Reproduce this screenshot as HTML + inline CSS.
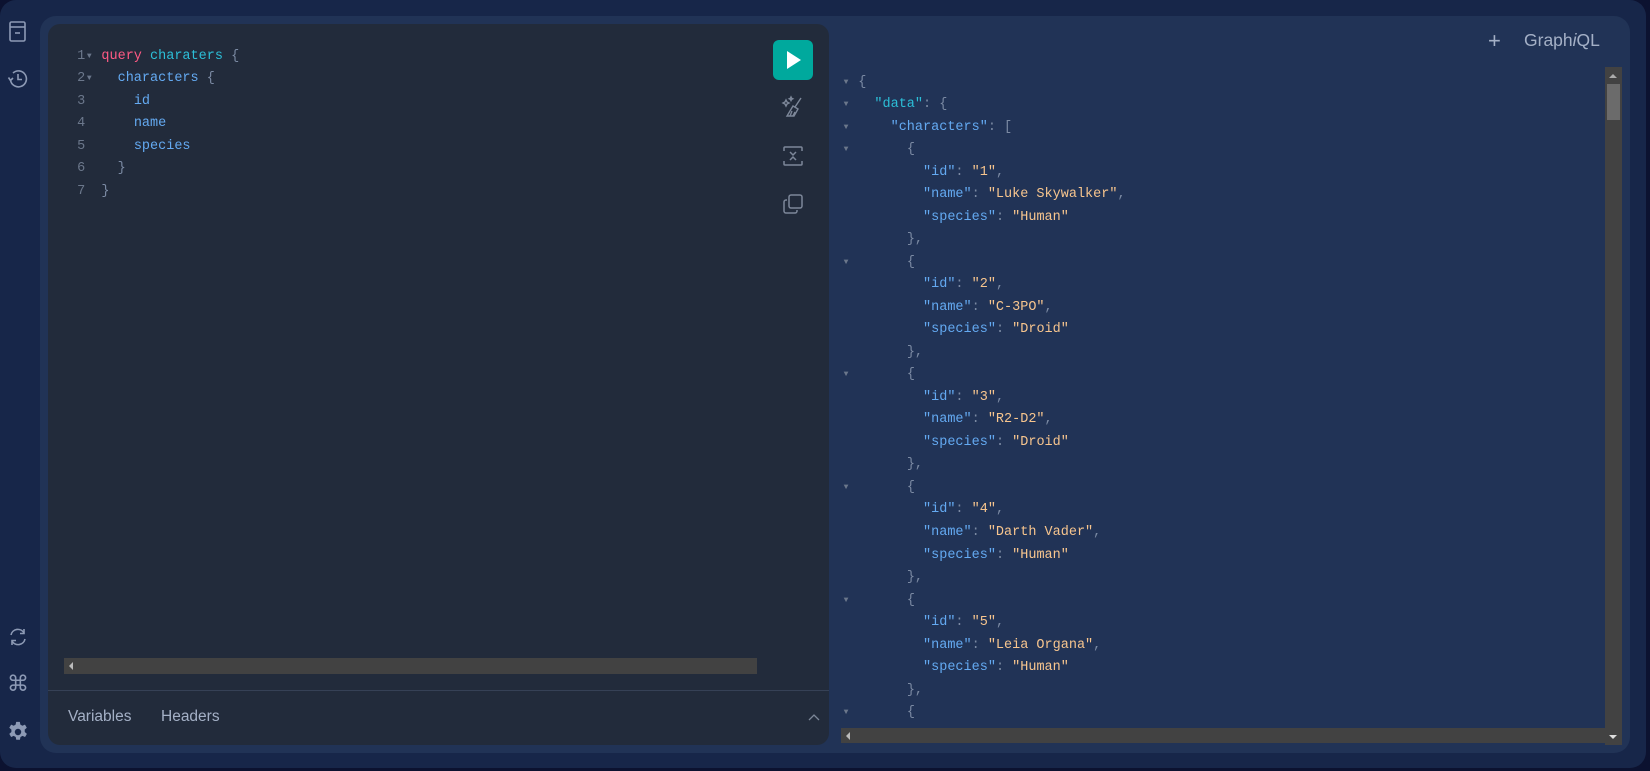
<!DOCTYPE html>
<html><head><meta charset="utf-8"><style>
*{margin:0;padding:0;box-sizing:border-box}
html,body{width:1650px;height:771px;overflow:hidden;background:#0c1230}
.outer{position:absolute;left:0;top:0;width:1646px;height:768px;background:#172649;border-radius:16px}
.panel{position:absolute;left:40px;top:16px;width:1590px;height:737px;background:#213356;border-radius:16px}
.editor{position:absolute;left:48px;top:24px;width:781px;height:721px;background:#222b3b;border-radius:12px}
pre{font-family:"Liberation Mono",monospace;font-size:13.5px;line-height:22.55px;position:absolute;margin:0}
.p{color:#7b8aa3}.k{color:#ff5a85}.c{color:#2cbfd8}.f{color:#64aaf2}.s{color:#f7c58e}.ln{color:#6b778b}
.tri{color:#6b778b;font-size:8px;display:inline-block;width:8.1px;text-align:center;vertical-align:top}
.run{position:absolute;left:773px;top:40px;width:40px;height:40px;background:#00a99d;border-radius:6px}
.ico{position:absolute}
.sb{position:absolute;background:#424242}
</style></head><body>
<div class="outer"></div>
<div class="panel"></div>
<div class="editor"></div>

<svg class="ico" style="left:7px;top:20px" width="22" height="24" viewBox="0 0 22 24" fill="none" stroke="#8d9ab5" stroke-width="1.6"><rect x="3" y="2" width="15" height="19" rx="1.5"/><line x1="3" y1="7" x2="18" y2="7"/><line x1="8" y1="13" x2="13" y2="13"/></svg>
<svg class="ico" style="left:7px;top:68px" width="22" height="22" viewBox="0 0 22 22" fill="none" stroke="#8d9ab5" stroke-width="1.6"><path d="M3.5 12 A8 8 0 1 0 6 5"/><path d="M1.5 9.5 L3.5 12.5 L6 10"/><path d="M11 6 V11.5 H15"/></svg>
<svg class="ico" style="left:7px;top:626px" width="22" height="22" viewBox="0 0 22 22" fill="none" stroke="#8d9ab5" stroke-width="1.6"><path d="M4 9 A7 7 0 0 1 17 7"/><path d="M17 3 V7.5 H13"/><path d="M18 13 A7 7 0 0 1 5 15"/><path d="M5 19 V14.5 H9"/></svg>
<div class="ico" style="left:7px;top:672px;color:#8d9ab5;font-size:22px;font-family:'DejaVu Sans',sans-serif">⌘</div>
<svg class="ico" style="left:7px;top:721px" width="22" height="22" viewBox="0 0 24 24" fill="#8d9ab5"><path d="M10 1h4l.6 3 2.2 1.2 2.8-1.2 2 3.4-2.3 2 .1 2.6 2.3 2-2 3.4-2.8-1.2-2.2 1.2-.6 3h-4l-.6-3-2.2-1.2-2.8 1.2-2-3.4 2.3-2v-2.6l-2.3-2 2-3.4 2.8 1.2L9.4 4z"/><circle cx="12" cy="12" r="3.5" fill="#172649"/></svg>

<pre style="left:69px;top:45.5px"><span class="ln"> 1</span><span class="tri">▼</span> <span class="k">query</span> <span class="c">charaters</span> <span class="p">{</span>
<span class="ln"> 2</span><span class="tri">▼</span>   <span class="f">characters</span> <span class="p">{</span>
<span class="ln"> 3</span>      <span class="f">id</span>
<span class="ln"> 4</span>      <span class="f">name</span>
<span class="ln"> 5</span>      <span class="f">species</span>
<span class="ln"> 6</span>    <span class="p">}</span>
<span class="ln"> 7</span>  <span class="p">}</span></pre>

<div class="run"><svg width="40" height="40" viewBox="0 0 40 40"><path d="M14 11 L28 20 L14 29 Z" fill="#fff"/></svg></div>
<svg class="ico" style="left:781px;top:95px" width="24" height="24" viewBox="0 0 24 24" fill="none" stroke="#7d8799" stroke-width="1.4"><path d="M20 3 L14 12"/><path d="M12 11 L17 14 L13 21 L6 21 Z"/><path d="M9 21 L11 16 M12 21 L14 17"/><path d="M5 5 l1 2 2 1-2 1-1 2-1-2-2-1 2-1z"/><path d="M10 2 l.6 1.2 1.2.6-1.2.6-.6 1.2-.6-1.2-1.2-.6 1.2-.6z"/></svg>
<svg class="ico" style="left:781px;top:144px" width="24" height="24" viewBox="0 0 24 24" fill="none" stroke="#7d8799" stroke-width="1.5"><path d="M3 7 V4 a1 1 0 0 1 1-1 H20 a1 1 0 0 1 1 1 V7"/><path d="M3 17 V20 a1 1 0 0 0 1 1 H20 a1 1 0 0 0 1-1 V17"/><path d="M9 8 L12 11 L15 8"/><path d="M9 16 L12 13 L15 16"/></svg>
<svg class="ico" style="left:781px;top:192px" width="24" height="24" viewBox="0 0 24 24" fill="none" stroke="#7d8799" stroke-width="1.5"><rect x="8" y="3" width="13" height="13" rx="2"/><path d="M6 8 H5 a2 2 0 0 0-2 2 V19 a2 2 0 0 0 2 2 H14 a2 2 0 0 0 2-2 V18"/></svg>

<div class="sb" style="left:64px;top:658px;width:693px;height:16px"><span style="position:absolute;left:5px;top:4px;width:0;height:0;border-top:4px solid transparent;border-bottom:4px solid transparent;border-right:4px solid #bbb"></span></div>
<div style="position:absolute;left:48px;top:690px;width:781px;height:1px;background:#364156"></div>
<div style="position:absolute;left:68px;top:708px;font:15.5px 'Liberation Sans',sans-serif;color:#a4b0c6">Variables</div>
<div style="position:absolute;left:161px;top:708px;font:15.5px 'Liberation Sans',sans-serif;color:#a4b0c6">Headers</div>
<svg class="ico" style="left:807px;top:712px" width="14" height="10" viewBox="0 0 14 10" fill="none" stroke="#7d8799" stroke-width="1.3"><path d="M2 8 L7 3 L12 8"/></svg>

<div style="position:absolute;left:1488px;top:28px;font:22px 'Liberation Sans',sans-serif;color:#a4b0c6">+</div>
<div style="position:absolute;left:1524px;top:30px;font:17.5px 'Liberation Sans',sans-serif;color:#a4b0c6">Graph<i>i</i>QL</div>

<pre style="left:842px;top:71.7px;line-height:22.52px"><span class="tri">▼</span> <span class="p">{</span>
<span class="tri">▼</span>   <span class="c">"data"</span><span class="p">: {</span>
<span class="tri">▼</span>     <span class="f">"characters"</span><span class="p">: [</span>
<span class="tri">▼</span>       <span class="p">{</span>
          <span class="f">"id"</span><span class="p">: </span><span class="s">"1"</span><span class="p">,</span>
          <span class="f">"name"</span><span class="p">: </span><span class="s">"Luke Skywalker"</span><span class="p">,</span>
          <span class="f">"species"</span><span class="p">: </span><span class="s">"Human"</span>
        <span class="p">},</span>
<span class="tri">▼</span>       <span class="p">{</span>
          <span class="f">"id"</span><span class="p">: </span><span class="s">"2"</span><span class="p">,</span>
          <span class="f">"name"</span><span class="p">: </span><span class="s">"C-3PO"</span><span class="p">,</span>
          <span class="f">"species"</span><span class="p">: </span><span class="s">"Droid"</span>
        <span class="p">},</span>
<span class="tri">▼</span>       <span class="p">{</span>
          <span class="f">"id"</span><span class="p">: </span><span class="s">"3"</span><span class="p">,</span>
          <span class="f">"name"</span><span class="p">: </span><span class="s">"R2-D2"</span><span class="p">,</span>
          <span class="f">"species"</span><span class="p">: </span><span class="s">"Droid"</span>
        <span class="p">},</span>
<span class="tri">▼</span>       <span class="p">{</span>
          <span class="f">"id"</span><span class="p">: </span><span class="s">"4"</span><span class="p">,</span>
          <span class="f">"name"</span><span class="p">: </span><span class="s">"Darth Vader"</span><span class="p">,</span>
          <span class="f">"species"</span><span class="p">: </span><span class="s">"Human"</span>
        <span class="p">},</span>
<span class="tri">▼</span>       <span class="p">{</span>
          <span class="f">"id"</span><span class="p">: </span><span class="s">"5"</span><span class="p">,</span>
          <span class="f">"name"</span><span class="p">: </span><span class="s">"Leia Organa"</span><span class="p">,</span>
          <span class="f">"species"</span><span class="p">: </span><span class="s">"Human"</span>
        <span class="p">},</span>
<span class="tri">▼</span>       <span class="p">{</span></pre>

<div style="position:absolute;left:841px;top:726px;width:780px;height:20px;background:#213356"></div>
<div class="sb" style="left:1605px;top:67px;width:17px;height:678px"></div>
<div style="position:absolute;left:1607px;top:84px;width:13px;height:36px;background:#6b6b6b"></div>
<span style="position:absolute;left:1609px;top:74px;width:0;height:0;border-left:4px solid transparent;border-right:4px solid transparent;border-bottom:4px solid #aaa"></span>
<span style="position:absolute;left:1609px;top:735px;width:0;height:0;border-left:4px solid transparent;border-right:4px solid transparent;border-top:4px solid #ddd"></span>
<div class="sb" style="left:841px;top:728px;width:764px;height:15px"><span style="position:absolute;left:5px;top:4px;width:0;height:0;border-top:4px solid transparent;border-bottom:4px solid transparent;border-right:4px solid #bbb"></span></div>
</body></html>
